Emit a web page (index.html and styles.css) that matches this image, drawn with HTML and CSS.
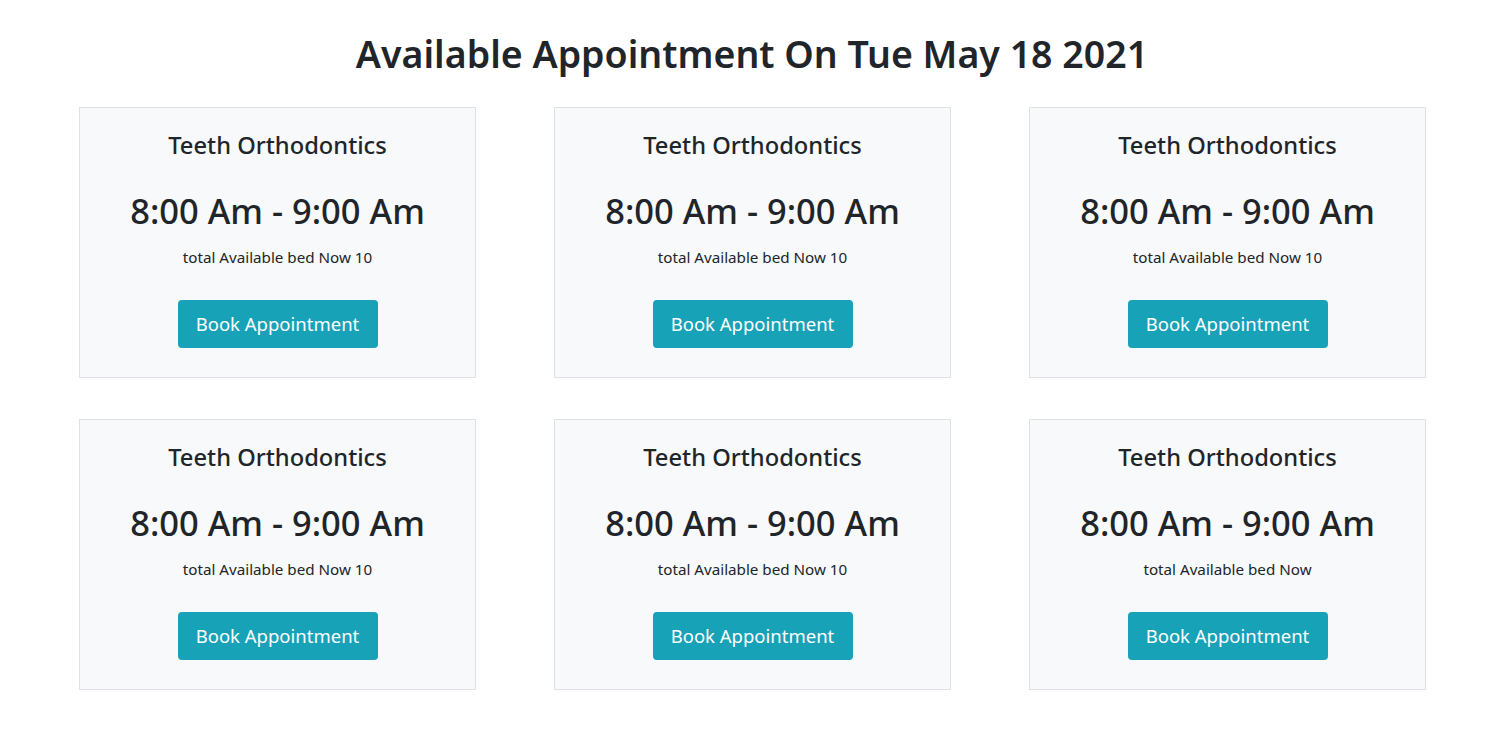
FILE: index.html
```html
<!DOCTYPE html>
<html lang="en">
<head>
<meta charset="utf-8">
<title>Available Appointment</title>
<link rel="stylesheet" href="styles.css">
</head>
<body>
<main class="page">
  <h1 class="page-title">Available Appointment On Tue May 18 2021</h1>
  <section class="grid">
    <div class="card">
      <h4 class="card-title">Teeth Orthodontics</h4>
      <h2 class="card-time">8:00 Am - 9:00 Am</h2>
      <p class="card-sub">total Available bed Now 10</p>
      <button class="btn">Book Appointment</button>
    </div>
    <div class="card">
      <h4 class="card-title">Teeth Orthodontics</h4>
      <h2 class="card-time">8:00 Am - 9:00 Am</h2>
      <p class="card-sub">total Available bed Now 10</p>
      <button class="btn">Book Appointment</button>
    </div>
    <div class="card">
      <h4 class="card-title">Teeth Orthodontics</h4>
      <h2 class="card-time">8:00 Am - 9:00 Am</h2>
      <p class="card-sub">total Available bed Now 10</p>
      <button class="btn">Book Appointment</button>
    </div>
    <div class="card">
      <h4 class="card-title">Teeth Orthodontics</h4>
      <h2 class="card-time">8:00 Am - 9:00 Am</h2>
      <p class="card-sub">total Available bed Now 10</p>
      <button class="btn">Book Appointment</button>
    </div>
    <div class="card">
      <h4 class="card-title">Teeth Orthodontics</h4>
      <h2 class="card-time">8:00 Am - 9:00 Am</h2>
      <p class="card-sub">total Available bed Now 10</p>
      <button class="btn">Book Appointment</button>
    </div>
    <div class="card">
      <h4 class="card-title">Teeth Orthodontics</h4>
      <h2 class="card-time">8:00 Am - 9:00 Am</h2>
      <p class="card-sub">total Available bed Now</p>
      <button class="btn">Book Appointment</button>
    </div>
  </section>
</main>
</body>
</html>
```
FILE: styles.css
```css
* { box-sizing: border-box; }
html, body { margin: 0; padding: 0; background: #fff; }
body {
  font-family: "Segoe UI", "Noto Sans", "Open Sans", sans-serif;
  color: #212529;
}
.page {
  padding-left: 79px;
  padding-right: 70px;
}
.page-title {
  margin: 30px 0 29px;
  font-size: 37.5px;
  font-weight: 560;
  line-height: 48px;
  text-align: center;
}
.grid {
  display: grid;
  grid-template-columns: repeat(3, 397px);
  column-gap: 78px;
  row-gap: 41px;
}
.card {
  background: #f8f9fa;
  border: 1px solid #dee2e6;
  padding: 22px 20px 29px;
  display: flex;
  flex-direction: column;
  align-items: center;
  text-align: center;
}
.card-title {
  margin: 0;
  font-size: 23.7px;
  font-weight: 500;
  line-height: 30px;
}
.card-time {
  margin: 31px 0 0;
  font-size: 34.5px;
  font-weight: 500;
  line-height: 40px;
}
.card-sub {
  margin: 15px 0 0;
  font-size: 15.2px;
  line-height: 22px;
}
.btn {
  margin-top: 32px;
  height: 48px;
  width: 200px;
  border: none;
  border-radius: 4px;
  background: #17a2b8;
  color: #fff;
  font-family: inherit;
  font-size: 18.5px;
  line-height: 28px;
  padding: 0;
  white-space: nowrap;
}
```
